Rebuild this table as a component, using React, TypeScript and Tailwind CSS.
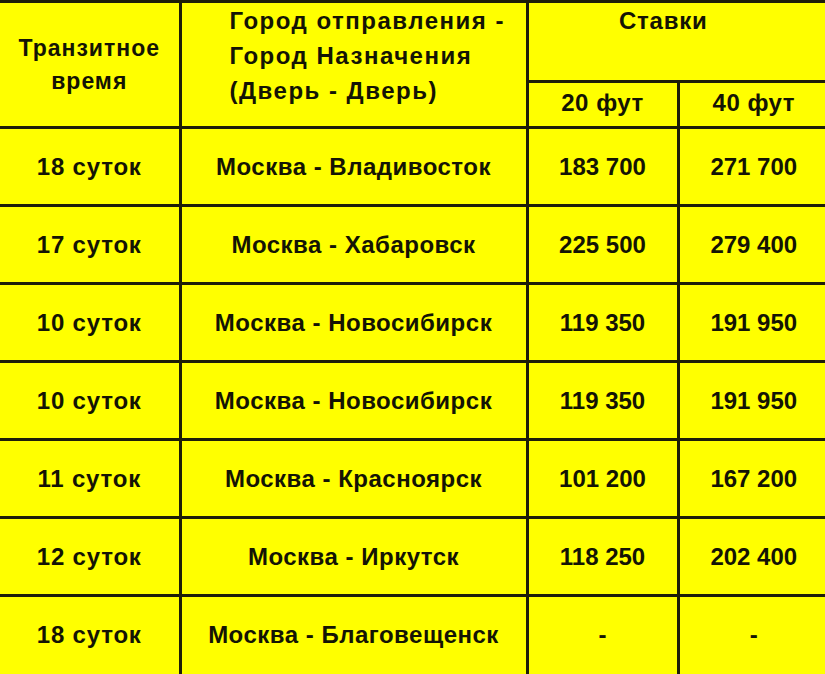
const rows = [
  { days: "18 суток", route: "Москва - Владивосток", ft20: "183 700", ft40: "271 700" },
  { days: "17 суток", route: "Москва - Хабаровск", ft20: "225 500", ft40: "279 400" },
  { days: "10 суток", route: "Москва - Новосибирск", ft20: "119 350", ft40: "191 950" },
  { days: "10 суток", route: "Москва - Новосибирск", ft20: "119 350", ft40: "191 950" },
  { days: "11 суток", route: "Москва - Красноярск", ft20: "101 200", ft40: "167 200" },
  { days: "12 суток", route: "Москва - Иркутск", ft20: "118 250", ft40: "202 400" },
  { days: "18 суток", route: "Москва - Благовещенск", ft20: "-", ft40: "-" },
];

export default function App() {
  return (
    <div className="w-[825px] h-[674px] overflow-hidden bg-[#ffff00] font-['Liberation_Sans',Arial,sans-serif] font-bold text-[#141404]">
      <table className="w-[828px] table-fixed border-collapse border-t-[3px] border-[#1e1e08]">
        <colgroup>
          <col className="w-[180px]" />
          <col className="w-[347px]" />
          <col className="w-[151px]" />
          <col className="w-[150px]" />
        </colgroup>
        <thead>
          <tr className="h-[80px]">
            <th
              rowSpan={2}
              className="border-r-[3px] border-b-[3px] border-[#1e1e08] align-middle text-center text-[23px] leading-[33px] tracking-[1px] font-bold"
            >
              Транзитное
              <br />
              время
            </th>
            <th
              rowSpan={2}
              className="border-r-[3px] border-b-[3px] border-[#1e1e08] align-top text-left pl-[48px] text-[24px] leading-[35px] tracking-[1.5px] font-bold whitespace-nowrap"
            >
              Город отправления -
              <br />
              Город Назначения
              <br />
              (Дверь - Дверь)
            </th>
            <th
              colSpan={2}
              className="border-b-[3px] border-[#1e1e08] align-top text-center pr-[30px] text-[24px] leading-[35px] tracking-[0.8px] font-bold"
            >
              Ставки
            </th>
          </tr>
          <tr className="h-[46px]">
            <th className="border-r-[3px] border-b-[3px] border-[#1e1e08] text-center text-[24px] tracking-[0.5px] font-bold pb-[4px]">
              20 фут
            </th>
            <th className="border-b-[3px] border-[#1e1e08] text-center text-[24px] tracking-[0.5px] font-bold pb-[4px]">
              40 фут
            </th>
          </tr>
        </thead>
        <tbody>
          {rows.map((r, i) => {
            const last = i === rows.length - 1;
            return (
              <tr key={i} className="h-[78px] text-[24px]">
                <td className={`border-r-[3px] border-[#1e1e08] text-center tracking-[0.8px] ${last ? "" : "border-b-[3px]"}`}>{r.days}</td>
                <td className={`border-r-[3px] border-[#1e1e08] text-center tracking-[0.5px] ${last ? "" : "border-b-[3px]"}`}>{r.route}</td>
                <td className={`border-r-[3px] border-[#1e1e08] text-center ${last ? "" : "border-b-[3px]"}`}>{r.ft20}</td>
                <td className={`border-[#1e1e08] text-center ${last ? "" : "border-b-[3px]"}`}>{r.ft40}</td>
              </tr>
            );
          })}
        </tbody>
      </table>
    </div>
  );
}
